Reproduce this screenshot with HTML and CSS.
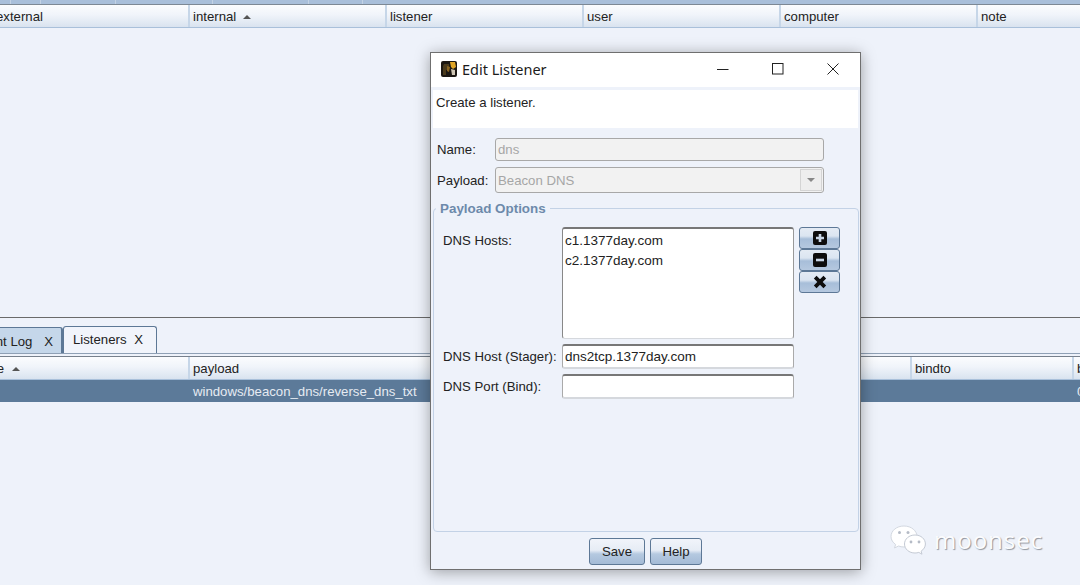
FILE: index.html
```html
<!DOCTYPE html>
<html>
<head>
    <meta charset="utf-8">
    <title>Edit Listener</title>
    <link rel="stylesheet" href="styles.css">
</head>

<body>
    <div class="top-strip">
        <span class="w10"></span><span class="w30"></span><span class="w75"></span><span class="w97"></span><span class="w96"></span><span class="w54"></span>
    </div>

    <div class="table-head top-head">
        <div class="cell">external</div>
        <div class="cell">internal <i class="sort"></i></div>
        <div class="cell">listener</div>
        <div class="cell">user</div>
        <div class="cell">computer</div>
        <div class="cell">note</div>
    </div>

    <div class="top-pane"></div>

    <div class="tabs">
        <div class="tab other"><span>Event Log</span><span>X</span></div>
        <div class="tab active"><span>Listeners</span><span>X</span></div>
    </div>

    <div class="table-head bottom-head">
        <div class="cell"><span class="cut">name</span><i class="sort"></i></div>
        <div class="cell">payload</div>
        <div class="cell">bindto</div>
        <div class="cell">b</div>
    </div>
    <div class="table-row">
        <div class="cell"></div>
        <div class="cell">windows/beacon_dns/reverse_dns_txt</div>
        <div class="cell"></div>
        <div class="cell">0</div>
    </div>

    <!-- dialog sits over the tables -->
    <div class="window">
        <div class="titlebar">
            <svg class="app-icon" width="16" height="16" viewBox="0 0 16 16">
                <rect width="16" height="16" rx="2" fill="#1c1712"/>
                <path d="M3 3h5v6H5v5H2V5z" fill="#4a3a1c"/>
                <path d="M9 1h5l1 5-3 2-2-2z" fill="#e0a526"/>
                <path d="M10 8l4 1v5h-3z" fill="#cfc6b4"/>
                <path d="M6 5l3 1-1 5-2-1z" fill="#8a6420"/>
            </svg>
            <span class="title">Edit Listener</span>
            <div class="win-buttons">
                <svg width="12" height="12" viewBox="0 0 12 12"><path d="M0 6.500h11.500" stroke="#222" fill="none"/></svg>
                <svg width="12" height="12" viewBox="0 0 12 12"><rect x=".5" y=".5" width="10.500" height="10.500" stroke="#222" fill="none"/></svg>
                <svg width="12" height="12" viewBox="0 0 12 12"><path d="M.5.500l11 11M11.500.500l-11 11" stroke="#222" fill="none"/></svg>
            </div>
        </div>

        <div class="intro">Create a listener.</div>

        <div class="form-top">
            <div class="form-row">
                <label>Name:</label>
                <div class="field disabled name-field">dns</div>
            </div>
            <div class="form-row">
                <label>Payload:</label>
                <div class="field disabled combo">Beacon DNS<span class="combo-btn"><i></i></span></div>
            </div>
        </div>

        <fieldset class="options">
            <legend>Payload Options</legend>
            <div class="options-grid">
                <label class="hosts-label">DNS Hosts:</label>
                <div class="field hosts">
                    <div>c1.1377day.com</div>
                    <div>c2.1377day.com</div>
                </div>
                <div class="side-buttons">
                    <button class="side-btn">
                        <svg width="14" height="14" viewBox="0 0 14 14"><rect width="14" height="14" rx="2" fill="#0d0d0d"/><path d="M7 3v8M3 7h8" stroke="#c9d6e6" stroke-width="2.600" fill="none"/></svg>
                    </button>
                    <button class="side-btn">
                        <svg width="14" height="14" viewBox="0 0 14 14"><rect width="14" height="14" rx="2" fill="#0d0d0d"/><path d="M3 7h8" stroke="#c9d6e6" stroke-width="2.600" fill="none"/></svg>
                    </button>
                    <button class="side-btn">
                        <svg width="14" height="14" viewBox="0 0 14 14"><path d="M2.200 2.200l9.600 9.600M11.800 2.200l-9.600 9.600" stroke="#0d0d0d" stroke-width="3.800" fill="none"/></svg>
                    </button>
                </div>
                <label>DNS Host (Stager):</label>
                <div class="field single">dns2tcp.1377day.com</div>
                <span></span>
                <label>DNS Port (Bind):</label>
                <div class="field single"></div>
                <span></span>
            </div>
        </fieldset>

        <div class="actions">
            <button class="btn save">Save</button>
            <button class="btn help">Help</button>
        </div>
    </div>

    <!-- watermark -->
    <div class="watermark">
        <svg width="38" height="30" viewBox="0 0 38 30">
            <path d="M14 1C6.500 1 1 5.800 1 11.500c0 3.300 1.800 6 4.600 8L4.500 23l4-2c1.700.6 3.500 1 5.500 1 8 0 13-5 13-10.500S21.500 1 14 1z" fill="#fff" stroke="#d3d8e0"/>
            <path d="M25 10c-6 0-10.500 4-10.500 9s4.500 9 10.500 9c1.300 0 2.600-.2 3.800-.6l3.200 1.800-.9-3c2.500-1.700 4.300-4.200 4.300-7.200 0-5-4.400-9-10.400-9z" fill="#fff" stroke="#c4cad4"/>
            <circle cx="9.500" cy="7.500" r="1.500" fill="#b5bbc6"/><circle cx="18" cy="7.500" r="1.500" fill="#b5bbc6"/>
            <circle cx="21" cy="17" r="1.400" fill="#b5bbc6"/><circle cx="29" cy="17" r="1.400" fill="#b5bbc6"/>
        </svg>
        <span class="mark-text">moonsec</span>
    </div>
</body>
</html>
```

FILE: styles.css
```css
body {
    margin: 0;
    width: 1080px;
    height: 585px;
    overflow: hidden;
    position: relative;
    background: #eef2fa;
    color: #222;
    font-family: "Liberation Sans", Arial, sans-serif;
    font-size: 13.2px;
}

.top-strip {
    display: flex;
    height: 4px;
    background: #a9bfda;
    border-bottom: 1px solid #7d8894;
}
.top-strip span {
    border-right: 1px solid #c3d2e4;
}
.w10 { width: 10px; }
.w30 { width: 29px; }
.w75 { width: 74px; }
.w97 { width: 96px; }
.w96 { width: 95px; }
.w54 { width: 53px; }

.table-head {
    display: grid;
    box-sizing: border-box;
    height: 23px;
    line-height: 24px;
    margin-left: -8px;
    background: linear-gradient(#fbfcfe, #f0f4fa 45%, #d9e3ef);
    border-bottom: 1px solid #a9c0da;
}
.top-head {
    grid-template-columns: repeat(5, 197px) 1fr;
}
.bottom-head {
    grid-template-columns: 197px 722px 162px 1fr;
}
.cell {
    padding-left: 4px;
    border-right: 2px solid #c6d6e8;
    margin-right: -1px;
    white-space: nowrap;
    overflow: hidden;
}
.cell:last-child {
    border-right: 0;
}
.sort {
    display: inline-block;
    margin-left: 3px;
    vertical-align: 2px;
    border-left: 4px solid transparent;
    border-right: 4px solid transparent;
    border-bottom: 4px solid #555;
}

.top-pane {
    height: 289px;
    border-bottom: 1px solid #6a6a6a;
}

.tabs {
    display: flex;
    align-items: flex-end;
    height: 35px;
    margin-left: -30px;
    border-bottom: 1px solid #8fa0b5;
}
.tab {
    display: flex;
    justify-content: space-between;
    box-sizing: border-box;
    white-space: nowrap;
    border: 1px solid #5d7896;
    border-bottom: 0;
    border-radius: 3px 3px 0 0;
}
.tab.other {
    width: 93px;
    height: 26px;
    padding: 6px 8px 0 2px;
    background: #c5d7ea;
    border-width: 1px 2px 0 1px;
}
.tab.active {
    width: 94px;
    height: 27px;
    padding: 5px 13px 0 9px;
    background: #f1f4fb;
}

.bottom-head {
    box-sizing: border-box;
    height: 24px;
    margin-top: 2px;
    border-top: 1px solid #77808c;
}
.cut {
    margin-left: -25px;
}
.bottom-head .sort {
    margin-left: 8px;
}
.table-row {
    display: grid;
    grid-template-columns: 197px 722px 162px 1fr;
    height: 22px;
    line-height: 23px;
    margin-left: -8px;
    background: #5c7a99;
    color: #e6ebf2;
}
.table-row .cell {
    border: 0;
}

.window {
    position: absolute;
    left: 430px;
    top: 52px;
    box-sizing: border-box;
    width: 431px;
    height: 518px;
    display: flex;
    flex-direction: column;
    padding: 0 2px;
    background: #eef2fa;
    border: 1px solid #6f6f6f;
    box-shadow: 0 2px 14px rgba(0, 0, 0, .35);
}
.titlebar {
    display: flex;
    align-items: center;
    box-sizing: border-box;
    height: 34px;
    margin: 0 -2px;
    padding: 0 21px 2px 10px;
    background: #fff;
    flex: none;
}
.app-icon {
    margin-right: 5px;
}
.title {
    font-family: "Noto Sans", sans-serif;
    font-size: 14.500px;
    color: #1b1b1b;
}
.win-buttons {
    margin-left: auto;
    display: flex;
    gap: 43px;
}
.intro {
    flex: none;
    box-sizing: border-box;
    height: 38px;
    margin-top: 3px;
    padding: 5px 0 0 3px;
    background: #fff;
}
.form-top {
    flex: none;
    padding: 10px 0 0 4px;
    display: flex;
    flex-direction: column;
    gap: 6px;
}
.form-row {
    display: flex;
    align-items: center;
}
.form-row label {
    width: 58px;
}
.field {
    box-sizing: border-box;
    background: #fff;
    border: 1px solid #aaa;
    border-top-color: #777;
    border-bottom-color: #d5d8dd;
    border-radius: 3px;
    padding-left: 2px;
}
.disabled {
    width: 329px;
    background: #f2f2f2;
    border-color: #a8a8a8;
    color: #a6a6a6;
}
.name-field {
    height: 23px;
    line-height: 21px;
}
.combo {
    display: flex;
    align-items: center;
    justify-content: space-between;
    height: 26px;
    padding-right: 1px;
}
.combo-btn {
    display: flex;
    align-items: center;
    justify-content: center;
    width: 20px;
    height: 20px;
    background: #eee;
    border: 1px solid #d4d4d4;
}
.combo-btn i {
    border-left: 4px solid transparent;
    border-right: 4px solid transparent;
    border-top: 4px solid #888;
}

.options {
    flex: 1;
    min-height: 0;
    margin: 8px -1px 0 0;
    padding: 0 0 0 9px;
    border: 1px solid #c3d2e6;
    border-radius: 4px;
}
.options legend {
    margin-left: -7px;
    padding: 0 4px;
    font-weight: bold;
    font-size: 13.400px;
    color: #6d8aab;
}
.options-grid {
    display: grid;
    grid-template-columns: 119px 232px 41px;
    grid-template-rows: 112px 25px 25px;
    row-gap: 5px;
    margin-top: 11px;
    align-items: center;
}
.options-grid .field {
    height: 100%;
    font-size: 13.500px;
}
.hosts-label {
    align-self: start;
    padding-top: 6px;
}
.hosts {
    padding: 2px 0 0 2px;
    line-height: 20px;
    border-top-width: 2px;
    border-left: 1px solid #888;
    border-right: 1px solid #999;
}
.single {
    line-height: 22px;
    border-top: 2px solid #777;
    border-bottom: 2px solid #d5d8dd;
}
.side-buttons {
    display: flex;
    flex-direction: column;
    align-self: start;
    margin-left: 5px;
    margin-right: -5px;
}
.side-btn {
    display: flex;
    align-items: center;
    justify-content: center;
    width: 41px;
    height: 22px;
    padding: 0;
    background: linear-gradient(#e4ebf4, #dbe5f1 40%, #a7bed9 55%, #b5c8df);
    border: 1px solid #5d7896;
    border-radius: 3px;
}

.actions {
    flex: none;
    display: flex;
    justify-content: center;
    gap: 5px;
    height: 37px;
    padding: 6px 0 0 0;
    box-sizing: border-box;
}
.btn {
    height: 27px;
    padding: 0;
    font-family: inherit;
    font-size: 13.200px;
    color: #222;
    background: linear-gradient(#f1f4fa, #e6ecf5 45%, #b5c9e0 60%, #a4bbd6);
    border: 1px solid #5d7896;
    border-radius: 3px;
}
.save { width: 56px; }
.help { width: 52px; }

.watermark {
    position: absolute;
    left: 890px;
    top: 523px;
    display: flex;
    align-items: center;
    gap: 6px;
}
.mark-text {
    font-family: "Open Sans", sans-serif;
    font-size: 24px;
    letter-spacing: 1px;
    color: #fbfcfe;
    text-shadow: 1px 1px 1px #8f949d;
}
```
